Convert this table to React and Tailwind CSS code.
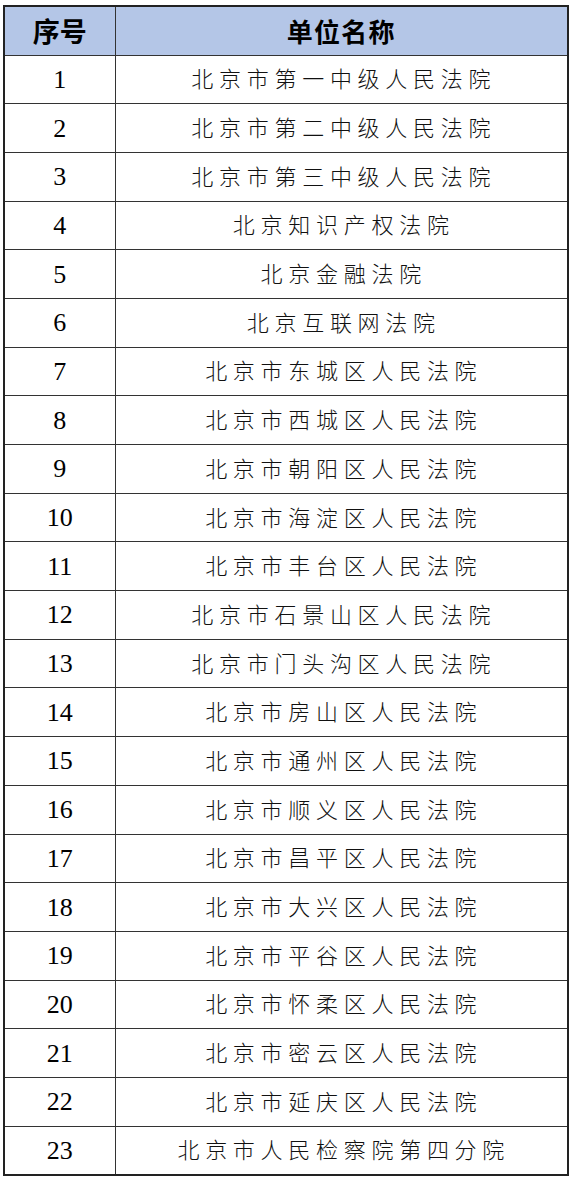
const COURTS = [
  '北京市第一中级人民法院',
  '北京市第二中级人民法院',
  '北京市第三中级人民法院',
  '北京知识产权法院',
  '北京金融法院',
  '北京互联网法院',
  '北京市东城区人民法院',
  '北京市西城区人民法院',
  '北京市朝阳区人民法院',
  '北京市海淀区人民法院',
  '北京市丰台区人民法院',
  '北京市石景山区人民法院',
  '北京市门头沟区人民法院',
  '北京市房山区人民法院',
  '北京市通州区人民法院',
  '北京市顺义区人民法院',
  '北京市昌平区人民法院',
  '北京市大兴区人民法院',
  '北京市平谷区人民法院',
  '北京市怀柔区人民法院',
  '北京市密云区人民法院',
  '北京市延庆区人民法院',
  '北京市人民检察院第四分院',
]

const cjk = "font-['Noto_Sans_CJK_SC',sans-serif]"

export default function App() {
  return (
    <div className="bg-white w-[574px] h-[1180px] pt-[5px] pl-[3px]">
      <table className="w-[566px] border-collapse border-2 border-[#222] table-fixed">
        <colgroup>
          <col className="w-[111px]" />
          <col />
        </colgroup>
        <thead>
          <tr className="h-[49px] bg-[#b4c6e7]">
            <th className={`border border-[#333] text-[27px] font-bold text-black ${cjk}`}>序号</th>
            <th className={`border border-[#333] text-[26px] font-bold text-black tracking-[0.05em] ${cjk}`}>单位名称</th>
          </tr>
        </thead>
        <tbody>
          {COURTS.map((name, i) => (
            <tr key={i} className="h-[48.7px]">
              <td className="border border-[#333] text-center text-[26px] font-normal text-black font-['Liberation_Serif',serif]">
                {i + 1}
              </td>
              <td className={`border border-[#333] text-center text-[22px] font-light text-[#111] tracking-[0.26em] pl-[5px] pb-[3px] ${cjk}`}>
                {name}
              </td>
            </tr>
          ))}
        </tbody>
      </table>
    </div>
  )
}
